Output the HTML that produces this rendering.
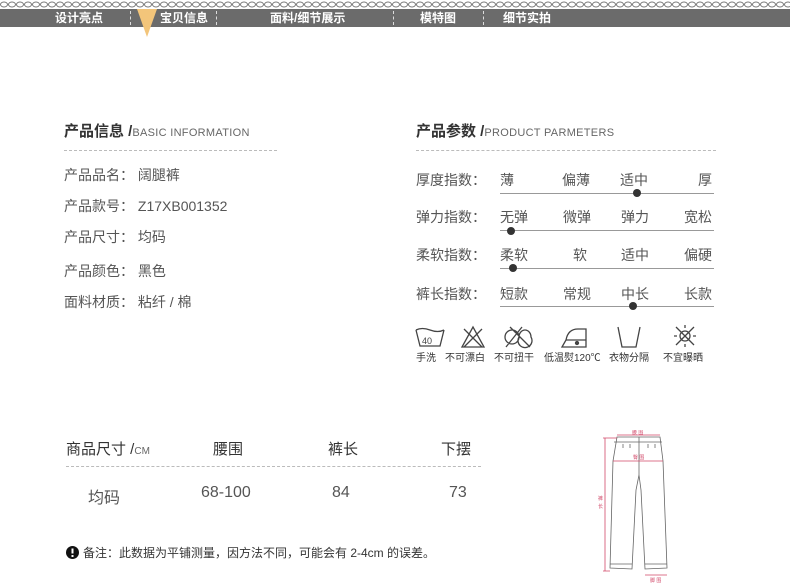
<!DOCTYPE html>
<html><head><meta charset="utf-8"><style>
*{margin:0;padding:0;box-sizing:border-box}
body{width:790px;height:585px;background:#fff;position:relative;overflow:hidden;font-family:"Liberation Sans","Noto Sans CJK SC",sans-serif;color:#555}
.a{position:absolute;white-space:nowrap}
.bar{position:absolute;left:0;top:9px;width:790px;height:18px;background:#6b6b6b}
.nav{position:absolute;top:10px;color:#fff;font-size:12px;font-weight:bold;line-height:16px}
.sep{position:absolute;top:11px;height:14px;border-left:1px dashed #ddd}
.h{font-size:15px;font-weight:bold;color:#333}
.h small{font-size:11px;font-weight:normal;color:#666;letter-spacing:.3px}
.dash{position:absolute;height:0;border-top:1px dashed #bbb}
.t{font-size:14px;color:#555}
.line{position:absolute;height:1px;background:#999;left:500px;width:214px}
.dot{position:absolute;width:8px;height:8px;border-radius:50%;background:#333}
.lab{position:absolute;top:349px;font-size:10px;color:#333}
</style></head><body>
<svg class="a" style="left:0;top:0" width="790" height="9"><defs><pattern id="c" width="8" height="9" patternUnits="userSpaceOnUse"><ellipse cx="4" cy="4.5" rx="3.5" ry="2.5" fill="none" stroke="#777" stroke-width="1"/></pattern></defs><rect width="790" height="9" fill="url(#c)"/></svg>
<div class="bar"></div>
<div class="nav" style="left:55px">设计亮点</div>
<div class="sep" style="left:130px"></div>
<svg class="a" style="left:135px;top:9px" width="24" height="29"><polygon points="2,0 22,0 12,28" fill="#f3c57a"/></svg>
<div class="nav" style="left:160px">宝贝信息</div>
<div class="sep" style="left:216px"></div>
<div class="nav" style="left:270px">面料/细节展示</div>
<div class="sep" style="left:393px"></div>
<div class="nav" style="left:420px">模特图</div>
<div class="sep" style="left:483px"></div>
<div class="nav" style="left:503px">细节实拍</div>

<div class="a h" style="left:64px;top:120px">产品信息 /<small>BASIC INFORMATION</small></div>
<div class="dash" style="left:64px;top:150px;width:213px"></div>
<div class="a t" style="left:64px;top:165px">产品品名： 阔腿裤</div>
<div class="a t" style="left:64px;top:196px">产品款号： Z17XB001352</div>
<div class="a t" style="left:64px;top:227px">产品尺寸： 均码</div>
<div class="a t" style="left:64px;top:261px">产品颜色： 黑色</div>
<div class="a t" style="left:64px;top:292px">面料材质： 粘纤 / 棉</div>

<div class="a h" style="left:416px;top:120px">产品参数 /<small>PRODUCT PARMETERS</small></div>
<div class="dash" style="left:416px;top:150px;width:300px"></div>
<div class="a t" style="left:416px;top:170px">厚度指数：</div>
<div class="a t" style="left:500px;top:170px">薄</div><div class="a t" style="left:562px;top:170px">偏薄</div><div class="a t" style="left:620px;top:170px">适中</div><div class="a t" style="left:698px;top:170px">厚</div>
<div class="line" style="top:193px"></div><div class="dot" style="left:633px;top:189px"></div>
<div class="a t" style="left:416px;top:207px">弹力指数：</div>
<div class="a t" style="left:500px;top:207px">无弹</div><div class="a t" style="left:563px;top:207px">微弹</div><div class="a t" style="left:621px;top:207px">弹力</div><div class="a t" style="left:684px;top:207px">宽松</div>
<div class="line" style="top:230px"></div><div class="dot" style="left:507px;top:227px"></div>
<div class="a t" style="left:416px;top:245px">柔软指数：</div>
<div class="a t" style="left:500px;top:245px">柔软</div><div class="a t" style="left:573px;top:245px">软</div><div class="a t" style="left:621px;top:245px">适中</div><div class="a t" style="left:684px;top:245px">偏硬</div>
<div class="line" style="top:268px"></div><div class="dot" style="left:509px;top:264px"></div>
<div class="a t" style="left:416px;top:284px">裤长指数：</div>
<div class="a t" style="left:500px;top:284px">短款</div><div class="a t" style="left:563px;top:284px">常规</div><div class="a t" style="left:621px;top:284px">中长</div><div class="a t" style="left:684px;top:284px">长款</div>
<div class="line" style="top:306px"></div><div class="dot" style="left:629px;top:302px"></div>

<svg class="a" style="left:410px;top:322px" width="310" height="28" fill="none" stroke="#444" stroke-width="1.3">
<path d="M6 8 L10 24 H30 L34 8 M6 8 Q12 5 20 8 Q28 11 34 8"/><text x="12" y="22" font-size="9" fill="#444" stroke="none">40</text>
<path d="M52 25 L63 5 L74 25 Z M54 7 L72 25 M72 7 L54 25"/>
<path d="M95 15 a7 7 0 1 0 14 0 a7 7 0 1 0 12 0 a6 7 0 1 0 -12 0 a7 7 0 1 0 -14 0 M100 5 L120 25 M112 5 L96 25"/>
<path d="M152 25 H176 V7 H168 Q158 7 156 18 Z M156 18 H176"/><circle cx="167" cy="21" r="1.5" fill="#444"/>
<path d="M208 5 L212 25 H226 L230 5"/>
<path d="M266 5 L284 23 M284 5 L266 23"/><circle cx="275" cy="14" r="5"/><path d="M275 3v3M275 22v3M264 14h3M283 14h3"/>
</svg>
<div class="lab" style="left:416px">手洗</div>
<div class="lab" style="left:445px">不可漂白</div>
<div class="lab" style="left:494px">不可扭干</div>
<div class="lab" style="left:544px">低温熨120℃</div>
<div class="lab" style="left:609px">衣物分隔</div>
<div class="lab" style="left:663px">不宜曝晒</div>

<div class="a" style="left:66px;top:438px;font-size:15px;color:#333">商品尺寸 /<span style="font-size:10px;color:#666">CM</span></div>
<div class="a" style="left:213px;top:438px;font-size:15px;color:#333">腰围</div>
<div class="a" style="left:328px;top:438px;font-size:15px;color:#333">裤长</div>
<div class="a" style="left:441px;top:438px;font-size:15px;color:#333">下摆</div>
<div class="dash" style="left:66px;top:466px;width:415px"></div>
<div class="a" style="left:88px;top:484px;font-size:16px">均码</div>
<div class="a" style="left:201px;top:484px;font-size:16px">68-100</div>
<div class="a" style="left:332px;top:484px;font-size:16px">84</div>
<div class="a" style="left:449px;top:484px;font-size:16px">73</div>
<svg class="a" style="left:66px;top:546px" width="13" height="13"><circle cx="6.5" cy="6.5" r="6.5" fill="#111"/><rect x="5.5" y="2.5" width="2" height="5" fill="#fff"/><rect x="5.5" y="9" width="2" height="2" fill="#fff"/></svg>
<div class="a" style="left:83px;top:544px;font-size:12px;color:#333">备注：此数据为平铺测量，因方法不同，可能会有 2-4cm 的误差。</div>

<svg class="a" style="left:590px;top:430px" width="90" height="155" fill="none" stroke="#666" stroke-width="0.8">
<path d="M27 7 H70 L73 31 L77 138 L55 139 L51 60 L49 45 L46 60 L42 139 L20 138 L23 31 Z"/>
<path d="M24 12 H72 M49 7 V45 M33 14v4M40 14v4M58 14v4M65 14v4 M20 134 H42 M55 134 H77"/>
<g stroke="#d24a6a"><path d="M27 5 H70 M23 31 H73 M15 8 V141 M13 8 H27 M13 141 H20 M55 145 H77"/></g>
<g fill="#d24a6a" stroke="none" font-size="5"><text x="42" y="4">腰 围</text><text x="43" y="29">臀 围</text><text x="8" y="70">裤</text><text x="8" y="78">长</text><text x="60" y="152">脚 围</text></g>
</svg>
</body></html>
